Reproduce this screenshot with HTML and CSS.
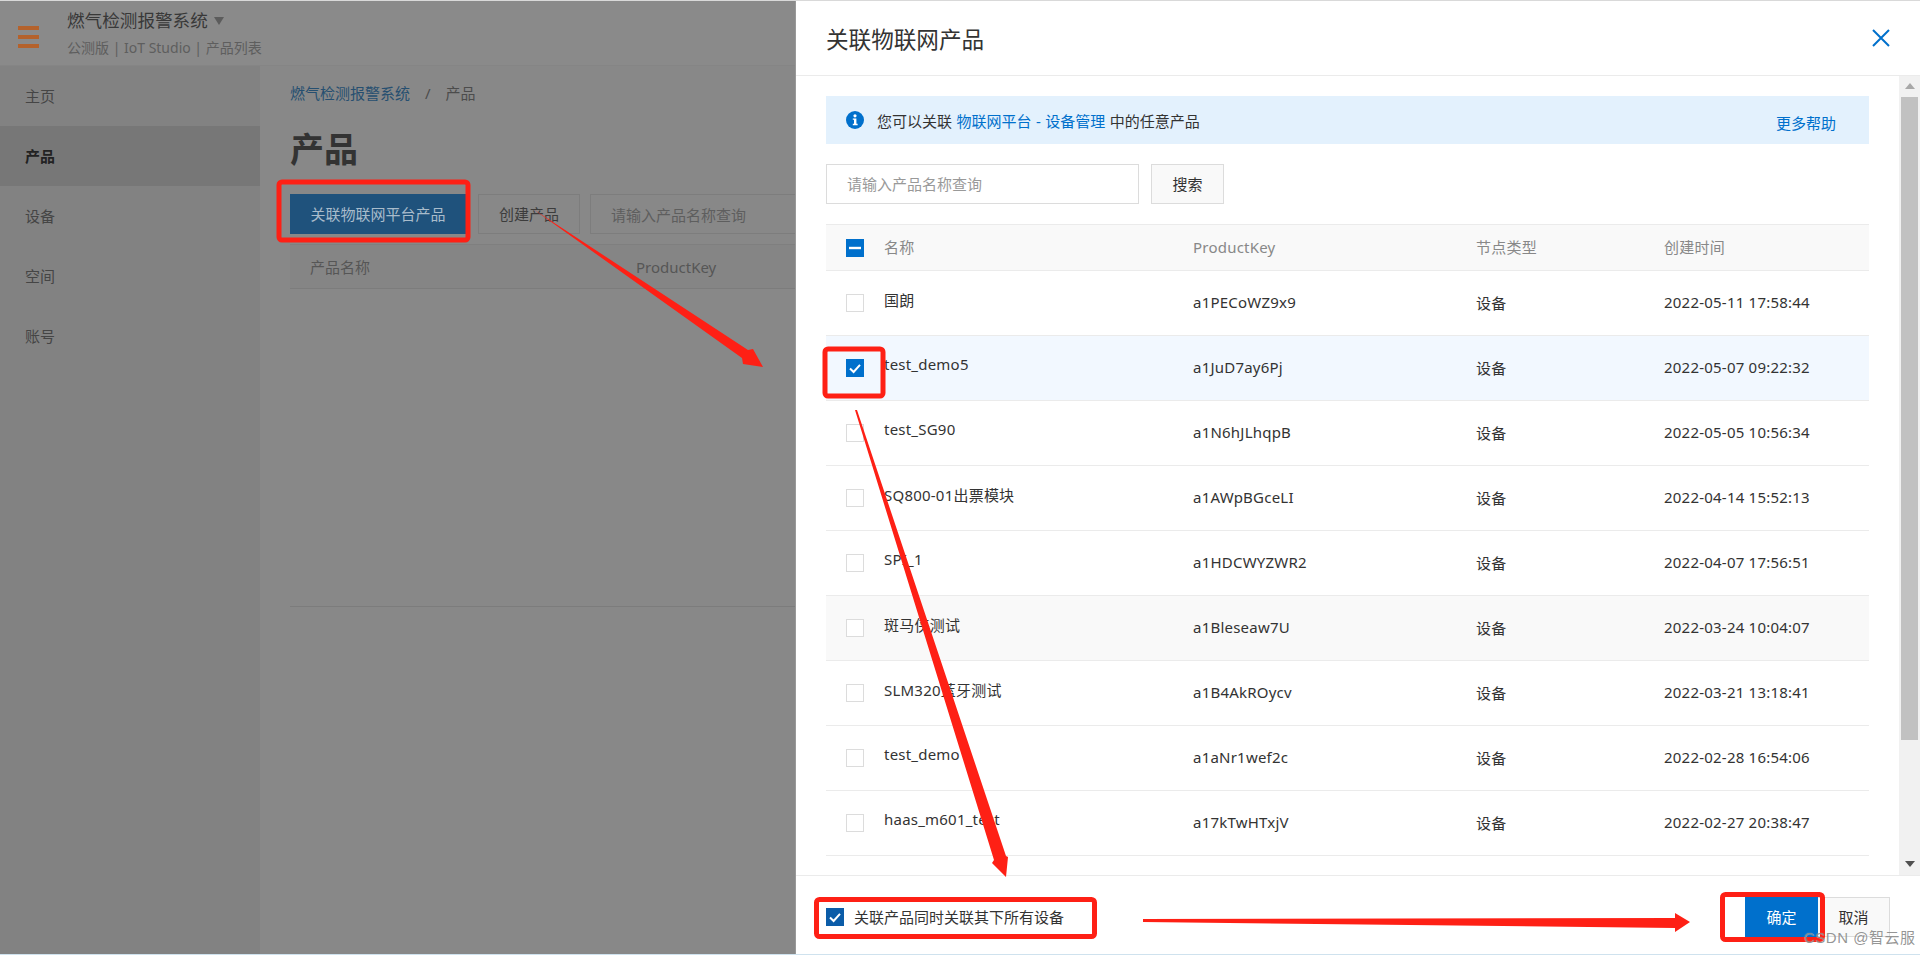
FILE: index.html
```html
<!DOCTYPE html>
<html lang="zh-CN">
<head>
<meta charset="UTF-8">
<meta name="viewport" content="width=device-width, initial-scale=1.0">
<title>关联物联网产品</title>
<link rel="stylesheet" href="styles.css">
</head>
<body>

<div class="screen">
  <!-- Dimmed console behind the drawer -->
  <div class="console">
    <div class="topbar">
      <div class="burger"><span></span><span></span><span></span></div>
      <div class="topbar-text">
        <div class="app-name">燃气检测报警系统 <span class="caret"></span></div>
        <div class="app-sub">公测版 | IoT Studio | 产品列表</div>
      </div>
    </div>
    <div class="console-body">
      <div class="sidebar">
        <div class="nav-item">主页</div>
        <div class="nav-item active">产品</div>
        <div class="nav-item">设备</div>
        <div class="nav-item">空间</div>
        <div class="nav-item">账号</div>
      </div>
      <div class="main">
        <div class="crumbs"><span class="crumb-link">燃气检测报警系统</span><span class="crumb-sep">/</span><span>产品</span></div>
        <h1 class="page-title">产品</h1>
        <div class="toolbar">
          <div class="btn-primary">关联物联网平台产品</div>
          <div class="btn-ghost">创建产品</div>
          <div class="fake-input">请输入产品名称查询</div>
        </div>
        <div class="bg-table-head">
          <span class="bg-col-name">产品名称</span>
          <span>ProductKey</span>
        </div>
        <div class="bg-table-empty"></div>
      </div>
    </div>
  </div>

  <!-- Drawer -->
  <div class="drawer">
    <div class="drawer-head">
      <div class="drawer-title">关联物联网产品</div>
      <svg class="close-icon" width="18" height="18" viewBox="0 0 18 18"><path d="M1 1L17 17M17 1L1 17" stroke="#0070cc" stroke-width="2" fill="none"/></svg>
    </div>

    <div class="drawer-body">
      <div class="drawer-content">
        <div class="alert">
          <svg class="info-icon" width="18" height="18" viewBox="0 0 18 18"><circle cx="9" cy="9" r="9" fill="#0070cc"/><circle cx="9" cy="4.8" r="1.6" fill="#fff"/><path d="M6.8 7.4H10.4V12.8H11.6V14.2H6.8V12.8H8V8.8H6.8Z" fill="#fff"/></svg>
          <span>您可以关联 <span class="link">物联网平台 - 设备管理</span> 中的任意产品</span>
          <span class="alert-help">更多帮助</span>
        </div>

        <div class="search">
          <div class="search-input">请输入产品名称查询</div>
          <div class="search-btn">搜索</div>
        </div>

        <div class="table">
          <div class="row row-head">
            <span class="check indeterminate"><svg width="18" height="18" viewBox="0 0 18 18"><path d="M3 9H15" stroke="#fff" stroke-width="2.4"/></svg></span>
            <span>名称</span><span>ProductKey</span><span>节点类型</span><span>创建时间</span>
          </div>
          <div class="row">
            <span class="check"></span>
            <span class="cell-name">国朗</span><span>a1PECoWZ9x9</span><span>设备</span><span>2022-05-11 17:58:44</span>
          </div>
          <div class="row selected">
            <span class="check checked"><svg width="18" height="18" viewBox="0 0 18 18"><path d="M4 9.5L7.6 13L14 5.8" stroke="#fff" stroke-width="2" fill="none"/></svg></span>
            <span class="cell-name">test_demo5</span><span>a1JuD7ay6Pj</span><span>设备</span><span>2022-05-07 09:22:32</span>
          </div>
          <div class="row">
            <span class="check"></span>
            <span class="cell-name">test_SG90</span><span>a1N6hJLhqpB</span><span>设备</span><span>2022-05-05 10:56:34</span>
          </div>
          <div class="row">
            <span class="check"></span>
            <span class="cell-name">SQ800-01出票模块</span><span>a1AWpBGceLI</span><span>设备</span><span>2022-04-14 15:52:13</span>
          </div>
          <div class="row">
            <span class="check"></span>
            <span class="cell-name">SPI_1</span><span>a1HDCWYZWR2</span><span>设备</span><span>2022-04-07 17:56:51</span>
          </div>
          <div class="row hovered">
            <span class="check"></span>
            <span class="cell-name">斑马侠测试</span><span>a1Bleseaw7U</span><span>设备</span><span>2022-03-24 10:04:07</span>
          </div>
          <div class="row">
            <span class="check"></span>
            <span class="cell-name">SLM320蓝牙测试</span><span>a1B4AkROycv</span><span>设备</span><span>2022-03-21 13:18:41</span>
          </div>
          <div class="row">
            <span class="check"></span>
            <span class="cell-name">test_demo</span><span>a1aNr1wef2c</span><span>设备</span><span>2022-02-28 16:54:06</span>
          </div>
          <div class="row">
            <span class="check"></span>
            <span class="cell-name">haas_m601_test</span><span>a17kTwHTxjV</span><span>设备</span><span>2022-02-27 20:38:47</span>
          </div>
        </div>
      </div>

      <div class="scrollbar">
        <div class="scroll-up"></div>
        <div class="scroll-thumb"></div>
        <div class="scroll-track"></div>
        <div class="scroll-down"></div>
      </div>
    </div>

    <div class="drawer-foot">
      <span class="check foot-check"><svg width="18" height="18" viewBox="0 0 18 18"><path d="M4 9.5L7.6 13L14 5.8" stroke="#fff" stroke-width="2" fill="none"/></svg></span>
      <span class="foot-label">关联产品同时关联其下所有设备</span>
      <div class="foot-buttons">
        <div class="btn-ok">确定</div>
        <div class="btn-cancel">取消</div>
      </div>
    </div>
  </div>
</div>
<div class="bottom-strip"></div>

<!-- Red annotations drawn on top of the screenshot -->
<svg class="marks" width="1920" height="955" viewBox="0 0 1920 955">
  <g fill="none" stroke="#fe2015" stroke-width="5">
    <rect x="279" y="182" width="189" height="58" rx="3"/>
    <rect x="825" y="349" width="58" height="47" rx="3"/>
    <rect x="816.5" y="899.5" width="278" height="37" rx="3"/>
    <rect x="1722.5" y="894.5" width="100" height="45" rx="3"/>
  </g>
  <g fill="#fe2015">
    <polygon points="533,209 748,350 753,349 763,367 743,364 742,358"/>
    <polygon points="855,410 857,410 1006,856 1008,857 1006,877 992,863 994,860"/>
    <polygon points="1143,919 1675,918 1675,913 1690,922 1675,932 1675,928 1143,922"/>
  </g>
</svg>
<div class="watermark">CSDN @智云服</div>

</body>
</html>
```

FILE: styles.css
```css
/* Page frame */
html, body {
  margin: 0;
  padding: 0;
  height: 955px;
  overflow: hidden;
}
body {
  font-family: "Noto Sans", "Noto Sans CJK SC", sans-serif;
  font-size: 15px;
  color: #333;
  background-color: #fff;
  display: flex;
  flex-direction: column;
  border-top: 1px solid #d9d9d9;
  box-sizing: border-box;
}
.screen {
  flex: 1;
  display: flex;
  min-height: 0;
}
.bottom-strip {
  height: 1px;
  background-color: #cfe2ee;
}

/* Dimmed console */
.console {
  width: 796px;
  flex-shrink: 0;
  background-color: #888;
  display: flex;
  flex-direction: column;
  overflow: hidden;
  border-right: 1px solid #999;
  box-sizing: border-box;
}
.topbar {
  height: 65px;
  flex-shrink: 0;
  display: flex;
  background-color: #8a8a8a;
  border-bottom: 1px solid #858585;
  box-sizing: border-box;
}
.burger {
  width: 21px;
  margin: 25px 0 0 18px;
  display: flex;
  flex-direction: column;
  gap: 5px;
}
.burger span {
  height: 4px;
  background-color: #b4622c;
}
.topbar-text {
  margin-left: 28px;
}
.app-name {
  font-size: 17.6px;
  line-height: 24px;
  margin-top: 7px;
  color: #383838;
  white-space: nowrap;
}
.caret {
  display: inline-block;
  width: 0;
  height: 0;
  margin-left: 2px;
  vertical-align: 2px;
  border-left: 5px solid transparent;
  border-right: 5px solid transparent;
  border-top: 8px solid #5c5c5c;
}
.app-sub {
  font-size: 14px;
  line-height: 20px;
  margin-top: 6px;
  color: #5e5e5e;
  white-space: nowrap;
}
.console-body {
  flex: 1;
  display: flex;
  min-height: 0;
}
.sidebar {
  width: 260px;
  flex-shrink: 0;
  background-color: #828282;
}
.nav-item {
  height: 60px;
  line-height: 60px;
  padding-left: 25px;
  color: #454545;
}
.nav-item.active {
  background-color: #777;
  color: #222;
  font-weight: bold;
}
.main {
  flex: 1;
  padding: 0 0 0 30px;
  min-width: 0;
}
.crumbs {
  margin-top: 15px;
  line-height: 24px;
  color: #4c4c4c;
  white-space: nowrap;
}
.crumb-link {
  color: #264f70;
}
.crumb-sep {
  margin: 0 15px;
}
.page-title {
  margin: 20px 0 0;
  font-size: 34px;
  line-height: 48px;
  font-weight: bold;
  color: #333;
}
.toolbar {
  display: flex;
  height: 40px;
  margin-top: 21px;
}
.btn-primary {
  width: 176px;
  background-color: #1f527c;
  color: #a9bccb;
  text-align: center;
  line-height: 40px;
}
.btn-ghost {
  width: 102px;
  margin-left: 12px;
  border: 1px solid #7d7d7d;
  box-sizing: border-box;
  text-align: center;
  line-height: 38px;
  color: #3c3c3c;
}
.fake-input {
  flex: 1;
  margin-left: 10px;
  padding-left: 20px;
  border: 1px solid #7d7d7d;
  border-right: none;
  line-height: 40px;
  color: #5e5e5e;
  white-space: nowrap;
}
.bg-table-head {
  display: flex;
  height: 45px;
  margin-top: 10px;
  line-height: 44px;
  color: #565656;
  background-color: #858585;
  border-top: 1px solid #7f7f7f;
  border-bottom: 1px solid #7c7c7c;
  box-sizing: border-box;
}
.bg-col-name {
  width: 346px;
  padding-left: 20px;
  box-sizing: border-box;
}
.bg-table-empty {
  height: 317px;
  border-bottom: 1px solid #7c7c7c;
}

/* Drawer */
.drawer {
  flex: 1;
  min-width: 0;
  display: flex;
  flex-direction: column;
  background-color: #fff;
}
.drawer-head {
  height: 75px;
  flex-shrink: 0;
  display: flex;
  align-items: center;
  justify-content: space-between;
  padding: 0 30px;
  border-bottom: 1px solid #ebebeb;
  box-sizing: border-box;
}
.drawer-title {
  font-size: 22.6px;
  color: #333;
}
.drawer-body {
  flex: 1;
  display: flex;
  min-height: 0;
}
.drawer-content {
  flex: 1;
  min-width: 0;
  padding: 20px 30px 0;
}
.alert {
  height: 48px;
  display: flex;
  align-items: center;
  background-color: #e3f1fd;
  padding-left: 20px;
  color: #333;
  word-spacing: 0.6px;
}
.info-icon {
  margin-right: 13px;
  flex-shrink: 0;
}
.link {
  color: #0070cc;
}
.alert-help {
  margin-left: auto;
  margin-right: 33px;
  padding-top: 4px;
  color: #0070cc;
}
.search {
  display: flex;
  margin-top: 20px;
  height: 40px;
}
.search-input {
  width: 313px;
  padding-left: 20px;
  border: 1px solid #dcdcdc;
  box-sizing: border-box;
  line-height: 38px;
  color: #999;
}
.search-btn {
  width: 73px;
  margin-left: 12px;
  border: 1px solid #dcdcdc;
  background-color: #f9f9f9;
  box-sizing: border-box;
  text-align: center;
  line-height: 38px;
}
.table {
  margin-top: 20px;
  border-top: 1px solid #ebebeb;
}
.row {
  display: grid;
  grid-template-columns: 38px 309px 283px 188px 1fr;
  align-items: center;
  height: 65px;
  padding-left: 20px;
  border-bottom: 1px solid #ebebeb;
  box-sizing: border-box;
  white-space: nowrap;
  letter-spacing: 0.22px;
}
.row > span {
  padding-bottom: 2px;
}
.row > .cell-name {
  padding-bottom: 8px;
}
.row-head {
  height: 46px;
  background-color: #f9f9f9;
  color: #888;
}
.row.selected {
  background-color: #f2f8ff;
}
.row.hovered {
  background-color: #f9f9f9;
}
.row > .check,
.check {
  display: block;
  width: 18px;
  height: 18px;
  padding: 0;
  border: 1px solid #dcdcdc;
  background-color: #fff;
  box-sizing: border-box;
}
.check svg {
  display: block;
  margin: -1px;
}
.check.indeterminate,
.check.checked {
  border-color: #0070cc;
  background-color: #0070cc;
}

/* Fake scrollbar */
.scrollbar {
  width: 21px;
  flex-shrink: 0;
  display: flex;
  flex-direction: column;
  align-items: center;
  background-color: #f1f1f1;
}
.scroll-up,
.scroll-down {
  width: 0;
  height: 0;
  border-left: 5px solid transparent;
  border-right: 5px solid transparent;
}
.scroll-up {
  margin: 7px 0 8px;
  border-bottom: 6px solid #a8a8a8;
}
.scroll-thumb {
  width: 17px;
  height: 643px;
  background-color: #c1c1c1;
}
.scroll-track {
  flex: 1;
}
.scroll-down {
  margin-bottom: 8px;
  border-top: 6px solid #505050;
}

/* Drawer footer */
.drawer-foot {
  height: 79px;
  flex-shrink: 0;
  display: flex;
  align-items: center;
  padding: 3px 30px 0;
  border-top: 1px solid #ebebeb;
  box-sizing: border-box;
}
.foot-check {
  border-color: #0b5ca8;
  background-color: #0b5ca8;
}
.foot-label {
  margin-left: 10px;
}
.foot-buttons {
  display: flex;
  margin-left: auto;
  height: 40px;
}
.btn-ok {
  width: 73px;
  background-color: #0070cc;
  color: #fff;
  text-align: center;
  line-height: 40px;
}
.btn-cancel {
  width: 72px;
  border: 1px solid #dcdcdc;
  border-left: none;
  background-color: #f9f9f9;
  box-sizing: border-box;
  text-align: center;
  line-height: 38px;
}

/* Annotations over the page */
.marks {
  position: absolute;
  left: 0;
  top: 0;
  pointer-events: none;
}
.watermark {
  position: absolute;
  left: 1804px;
  top: 927px;
  font-family: "Liberation Sans", "Noto Sans CJK SC", sans-serif;
  font-size: 15px;
  line-height: 22px;
  letter-spacing: 0.5px;
  color: rgba(130, 130, 130, 0.85);
  text-shadow: 0 0 1px rgba(255, 255, 255, 0.6);
  white-space: nowrap;
}
```
